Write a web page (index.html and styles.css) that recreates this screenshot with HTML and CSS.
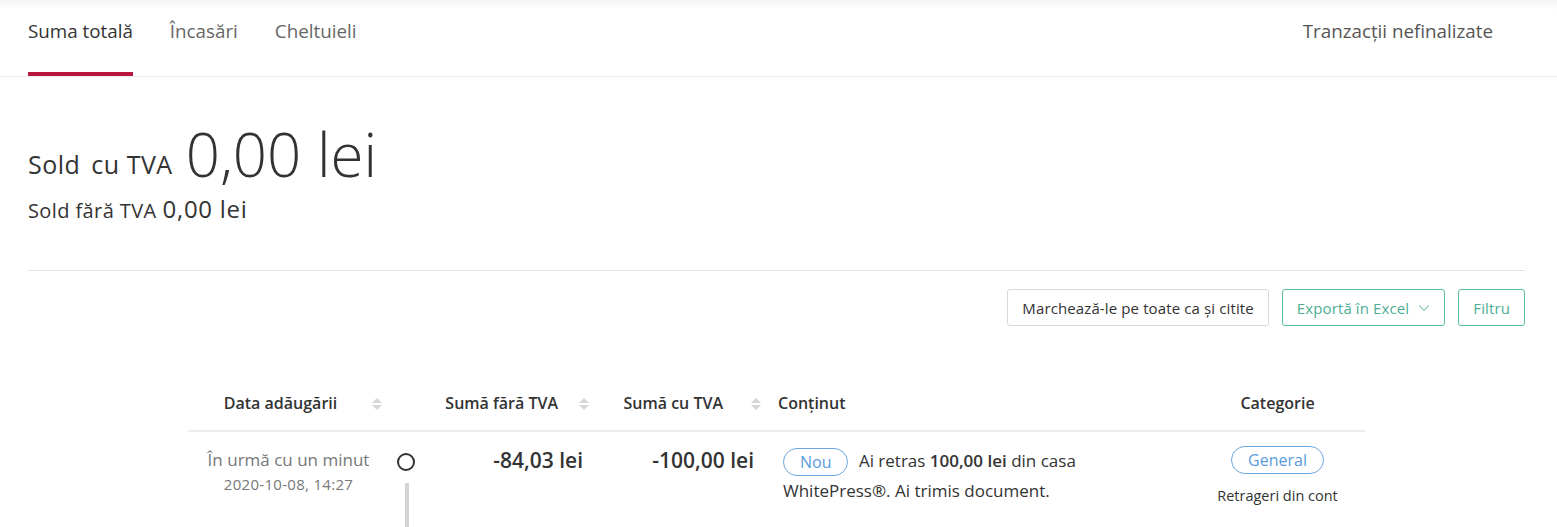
FILE: index.html
```html
<!DOCTYPE html>
<html lang="ro">

<head>
    <meta charset="UTF-8">
    <meta name="viewport" content="width=device-width, initial-scale=1.0">
    <title>Tranzacții</title>
    <link rel="stylesheet" href="styles.css">
</head>

<body>
    <nav class="tabs">
        <div class="tabs-left">
            <a class="tab active">Suma totală</a>
            <a class="tab">Încasări</a>
            <a class="tab">Cheltuieli</a>
        </div>
        <a class="tab tab-right">Tranzacții nefinalizate</a>
    </nav>

    <div class="content">
        <div class="balance"><span class="balance-label">Sold</span><span class="balance-label">cu TVA</span><span class="balance-value">0,00 lei</span></div>
        <div class="balance-net"><span class="net-label">Sold fără TVA</span><span class="net-value">0,00 lei</span></div>

        <hr class="divider">

        <div class="actions">
            <button class="btn">Marchează-le pe toate ca și citite</button>
            <button class="btn btn-green">Exportă în Excel
                <svg class="chevron" width="12" height="8" viewBox="0 0 12 8"><path d="M1 1.5 L6 6.5 L11 1.5" fill="none" stroke="currentColor" stroke-width="1.2"/></svg>
            </button>
            <button class="btn btn-green">Filtru</button>
        </div>

        <div class="table">
            <div class="thead">
                <div class="th th-date">Data adăugării<span class="sort"></span></div>
                <div class="th"></div>
                <div class="th th-num">Sumă fără TVA<span class="sort"></span></div>
                <div class="th th-num th-num-2">Sumă cu TVA<span class="sort"></span></div>
                <div class="th th-text">Conținut</div>
                <div class="th th-center">Categorie</div>
            </div>
            <div class="row">
                <div class="cell cell-date">
                    <div class="ago">În urmă cu un minut</div>
                    <div class="date">2020-10-08, 14:27</div>
                </div>
                <div class="cell cell-timeline">
                    <span class="dot"></span>
                </div>
                <div class="cell cell-num">-84,03 lei</div>
                <div class="cell cell-num cell-num-2">-100,00 lei</div>
                <div class="cell cell-text">
                    <span class="pill">Nou</span> <span class="message">Ai retras <b>100,00 lei</b> din casa WhitePress®. Ai trimis document.</span>
                </div>
                <div class="cell cell-center">
                    <span class="pill">General</span>
                    <div class="category">Retrageri din cont</div>
                </div>
            </div>
        </div>
    </div>
</body>

</html>
```

FILE: styles.css
```css
body {
    margin: 0;
    font-family: "Open Sans", Arial, sans-serif;
    color: #333;
    background: #fff;
    overflow: hidden;
}

.tabs {
    display: flex;
    justify-content: space-between;
    padding: 0 64px 0 28px;
    border-bottom: 1px solid #ececec;
    background: linear-gradient(to bottom, #f4f4f4, #fff 10px);
}

.tabs-left {
    display: flex;
    gap: 37px;
}

.tab {
    display: block;
    padding: 19px 0 29px;
    font-size: 18.8px;
    line-height: 24px;
    color: #666;
    border-bottom: 4px solid transparent;
}

.tab.active {
    color: #333;
    border-bottom-color: #b8163f;
}

.tab-right {
    color: #555;
}

.content {
    padding: 0 32px 0 28px;
}

/* balance */

.balance {
    margin-top: 41px;
    font-size: 60px;
    line-height: 72px;
}

.balance-label {
    font-size: 25px;
    line-height: 1;
    letter-spacing: 0.5px;
    vertical-align: 3px;
    margin-right: 11px;
}

.balance-label + .balance-label {
    margin-right: 13px;
}

.balance-value {
    font-weight: 300;
}

.balance-net {
    margin-top: 7px;
    font-size: 20px;
    line-height: 26px;
}

.net-label {
    letter-spacing: 0.4px;
    margin-right: 6px;
}

.net-value {
    font-size: 24px;
    line-height: 1;
    letter-spacing: 0.7px;
}

.divider {
    border: none;
    border-top: 1px solid #e4e4e4;
    margin: 46px 0 18px;
}

/* buttons */

.actions {
    display: flex;
    justify-content: flex-end;
    gap: 13px;
}

.btn {
    height: 37px;
    padding: 0 14px;
    font-family: inherit;
    font-size: 15px;
    letter-spacing: 0.12px;
    color: #333;
    background: #fff;
    border: 1px solid #d9d9d9;
    border-radius: 3px;
    display: flex;
    align-items: center;
    gap: 9px;
}

.btn-green {
    color: #4eae95;
    border-color: #5bbaa3;
}

.chevron {
    color: #8ccfbe;
}

/* table */

.table {
    width: 1177px;
    margin: 60px 0 0 160px;
}

.thead,
.row {
    display: grid;
    grid-template-columns: 207px 25px 175px 170px 425px 175px;
}

.thead {
    border-bottom: 2px solid #ededed;
}

.th {
    position: relative;
    padding: 7px 0 17px;
    font-size: 16px;
    font-weight: 600;
    line-height: 20px;
}

.th-date {
    text-align: center;
    padding-right: 22px;
}

.th-num {
    text-align: right;
    padding-right: 37px;
}

.th-num-2 {
    padding-right: 42px;
}

.th-text {
    padding-left: 13px;
}

.th-center {
    text-align: center;
}

.sort {
    position: absolute;
    right: 6px;
    top: 12px;
    width: 10px;
    height: 12px;
}

.th-date .sort {
    right: 13px;
}

.th-num-2 .sort {
    right: 4px;
}

.sort::before,
.sort::after {
    content: "";
    position: absolute;
    left: 0;
    border-left: 5px solid transparent;
    border-right: 5px solid transparent;
}

.sort::before {
    top: 0;
    border-bottom: 5px solid #d6d6d6;
}

.sort::after {
    bottom: 0;
    border-top: 5px solid #d6d6d6;
}

.row {
    height: 97px;
}

.cell {
    padding-top: 14px;
}

.cell-date {
    text-align: center;
    padding-right: 6px;
}

.ago {
    font-size: 17px;
    line-height: 28px;
    color: #777;
}

.date {
    font-size: 15px;
    letter-spacing: 0.3px;
    line-height: 20px;
    color: #777;
}

.cell-timeline {
    position: relative;
}

.dot {
    position: absolute;
    left: 2px;
    top: 21px;
    width: 18px;
    height: 18px;
    border: 2px solid #333;
    border-radius: 50%;
    box-sizing: border-box;
}

.cell-timeline::after {
    content: "";
    position: absolute;
    left: 10px;
    top: 51px;
    bottom: 0;
    width: 4px;
    background: #d4d4d4;
}

.cell-num {
    text-align: right;
    padding-right: 12px;
    font-size: 21px;
    font-weight: 600;
    line-height: 28px;
}

.cell-num-2 {
    padding-right: 11px;
}

.cell-text {
    padding: 14px 13px 0 18px;
    font-size: 17px;
    line-height: 29px;
}

.message b {
    font-weight: 600;
}

.pill {
    display: inline-block;
    box-sizing: border-box;
    height: 28px;
    padding: 0 16px;
    font-size: 16px;
    line-height: 26px;
    color: #5a9bdc;
    border: 1px solid #6aa7e0;
    border-radius: 14px;
    vertical-align: middle;
    margin-right: 6px;
}

.cell-center {
    text-align: center;
}

.cell-center .pill {
    margin-right: 0;
}

.category {
    font-size: 14.5px;
    line-height: 20px;
    margin-top: 12px;
}
```
